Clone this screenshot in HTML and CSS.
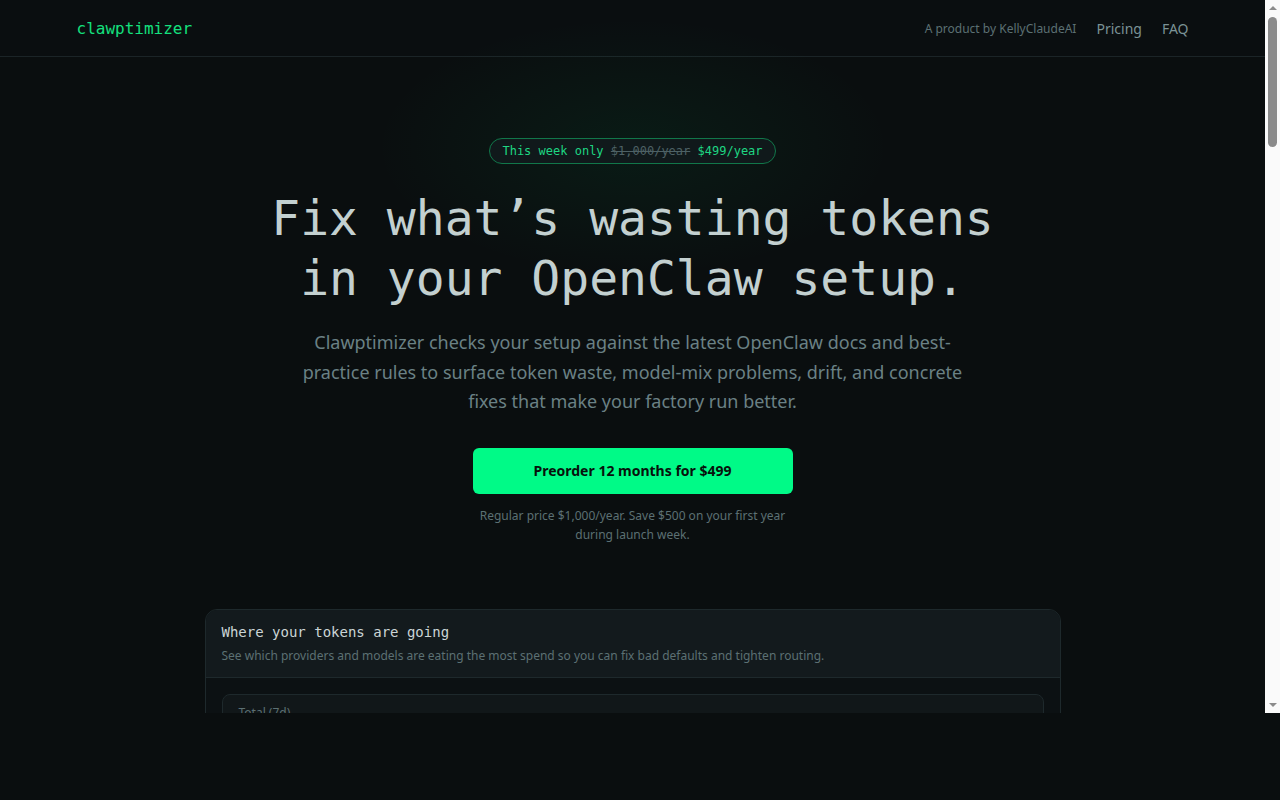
FILE: index.html
```html
<!DOCTYPE html>
<html lang="en">
<head>
<meta charset="utf-8">
<title>clawptimizer</title>
<link rel="stylesheet" href="styles.css">
</head>
<body>
<div class="window">
  <div class="viewport">
    <header class="site-header">
      <div class="container header-inner">
        <a class="logo" href="#">clawptimizer</a>
        <nav class="nav">
          <span class="byline">A product by KellyClaudeAI</span>
          <a href="#pricing">Pricing</a>
          <a href="#faq">FAQ</a>
        </nav>
      </div>
    </header>

    <main>
      <section class="hero">
        <div class="glow"></div>
        <div class="badge">This week only <s>$1,000/year</s> <span class="price">$499/year</span></div>
        <h1>Fix what’s wasting tokens<br>in your OpenClaw setup.</h1>
        <p class="lead">Clawptimizer checks your setup against the latest OpenClaw docs and best-practice rules to surface token waste, model-mix problems, drift, and concrete fixes that make your factory run better.</p>
        <a class="cta" href="#pricing">Preorder 12 months for $499</a>
        <p class="fineprint">Regular price $1,000/year. Save $500 on your first year during launch week.</p>
      </section>

      <section class="demo">
        <div class="card">
          <div class="card-head">
            <h2>Where your tokens are going</h2>
            <p>See which providers and models are eating the most spend so you can fix bad defaults and tighten routing.</p>
          </div>
          <div class="card-body">
            <div class="stat">
              <div class="stat-label">Total (7d)</div>
              <div class="stat-value">4.2M tokens</div>
            </div>
          </div>
        </div>
      </section>
    </main>
  </div>
  <div class="scrollbar" aria-hidden="true">
    <div class="sb-btn sb-up"></div>
    <div class="sb-track">
      <div class="sb-thumb"></div>
    </div>
    <div class="sb-btn sb-down"></div>
  </div>
</div>
</body>
</html>
```

FILE: styles.css
```css
* { box-sizing: border-box; }

html, body {
  margin: 0;
  padding: 0;
  background: #0a0e0f;
}

body {
  font-family: "Noto Sans", "DejaVu Sans", sans-serif;
  color: #c5d1d2;
  height: 800px;
  overflow: hidden;
}

.window {
  display: flex;
  height: 713px;
}

.viewport {
  flex: 1;
  min-width: 0;
  height: 713px;
  overflow: hidden;
  background: #0a0e0f;
}

/* scrollbar chrome */
.scrollbar {
  width: 15px;
  flex: none;
  height: 713px;
  background: #fafafa;
  display: flex;
  flex-direction: column;
}

.sb-btn {
  height: 15px;
  flex: none;
  display: flex;
  justify-content: center;
}

.sb-up::before,
.sb-down::before {
  content: "";
  width: 0;
  height: 0;
  border-left: 4px solid transparent;
  border-right: 4px solid transparent;
}

.sb-up { align-items: flex-start; padding-top: 6px; }
.sb-up::before { border-bottom: 4px solid #8b8b8b; }

.sb-down { align-items: flex-start; padding-top: 5px; }
.sb-down::before { border-top: 4px solid #8b8b8b; }

.sb-track {
  flex: 1;
  padding: 2px 3px 0 3px;
}

.sb-thumb {
  height: 130px;
  background: #8b8b8b;
  border-radius: 5px;
}

a { text-decoration: none; color: inherit; }

.container {
  max-width: 1152px;
  margin: 0 auto;
  padding: 0 20px;
}

.site-header {
  height: 57px;
  border-bottom: 1px solid #1b2427;
  background: #0a0e10;
}

.header-inner {
  height: 56px;
  display: flex;
  align-items: center;
  justify-content: space-between;
}

.logo {
  font-family: "DejaVu Sans Mono", "Liberation Mono", monospace;
  font-size: 16px;
  color: #14e07e;
}

.nav {
  display: flex;
  align-items: center;
  gap: 20px;
  font-size: 14px;
  color: #7b9295;
}

.nav .byline {
  font-size: 12px;
  color: #5c7073;
}

.hero {
  position: relative;
  display: flex;
  flex-direction: column;
  align-items: center;
  text-align: center;
  padding-top: 81px;
}

.glow {
  position: absolute;
  top: -40px;
  left: 50%;
  width: 520px;
  height: 260px;
  transform: translateX(-50%);
  background: radial-gradient(ellipse at center, rgba(0, 200, 110, 0.07) 0%, rgba(0, 200, 110, 0.03) 40%, rgba(0, 0, 0, 0) 70%);
  pointer-events: none;
}

.badge {
  position: relative;
  font-family: "DejaVu Sans Mono", "Liberation Mono", monospace;
  font-size: 12px;
  line-height: 24px;
  padding: 0 12px;
  border: 1px solid #11774a;
  border-radius: 13px;
  background: #10191b;
  color: #1ed683;
}

.badge s {
  color: #4d6165;
}

.badge .price { color: #1ed683; }

h1 {
  position: relative;
  margin: 24px 0 0;
  font-family: "DejaVu Sans Mono", "Liberation Mono", monospace;
  font-weight: 400;
  font-size: 48px;
  line-height: 60px;
  color: #c3d0d0;
  letter-spacing: 0;
}

.lead {
  margin: 20px 0 0;
  max-width: 672px;
  font-size: 18px;
  line-height: 29.5px;
  color: #6a8185;
}

.cta {
  margin-top: 31px;
  width: 320px;
  height: 46px;
  display: flex;
  align-items: center;
  justify-content: center;
  background: #00fa87;
  color: #07120c;
  font-weight: 700;
  font-size: 14px;
  border-radius: 6px;
}

.fineprint {
  margin: 12px 0 0;
  max-width: 320px;
  font-size: 12px;
  line-height: 19px;
  color: #5c7073;
}

.demo {
  max-width: 896px;
  margin: 65px auto 0;
  padding: 0 20px;
}

.card {
  border: 1px solid #1e292c;
  border-radius: 12px;
  background: #0c1113;
  overflow: hidden;
}

.card-head {
  background: #131a1d;
  border-bottom: 1px solid #1e292c;
  padding: 12px 16px 13px;
}

.card-head h2 {
  margin: 0;
  font-family: "DejaVu Sans Mono", "Liberation Mono", monospace;
  font-weight: 400;
  font-size: 14px;
  line-height: 20px;
  color: #cbd5d6;
}

.card-head p {
  margin: 6px 0 0;
  font-size: 12px;
  line-height: 16px;
  color: #5c7073;
}

.card-body {
  padding: 16px;
}

.stat {
  border: 1px solid #1e292c;
  border-radius: 8px;
  background: #111719;
  padding: 10px 16px 12px;
}

.stat-label {
  font-size: 12px;
  line-height: 16px;
  color: #5c7073;
}

.stat-value {
  margin-top: 6px;
  font-family: "DejaVu Sans Mono", monospace;
  font-size: 20px;
  color: #cbd5d6;
}
```
